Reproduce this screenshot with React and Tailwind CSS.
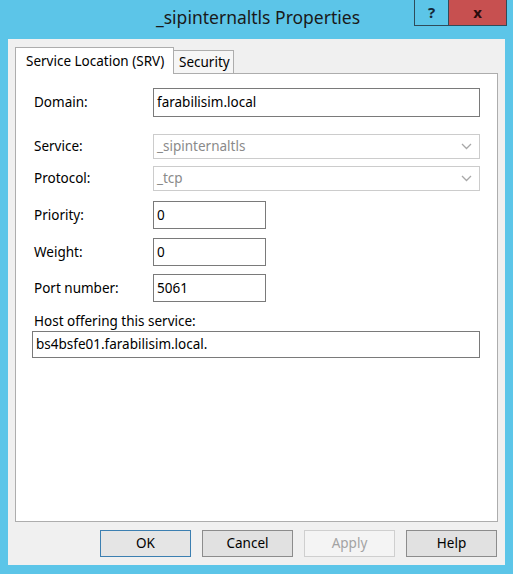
const font = { fontFamily: '"Noto Sans", "Open Sans", Arial, sans-serif' };

const Chevron = () => (
  <svg width="11" height="7" viewBox="0 0 11 7" className="mr-[7px]">
    <path d="M1 1 L5.5 5.5 L10 1" fill="none" stroke="#a8a8a8" strokeWidth="1.3" />
  </svg>
);

const TextRow = ({ label, value, mt, h, w }) => (
  <div className={`flex items-center ${mt}`}>
    <div className="w-[121px] pl-[2px] text-[13.5px] text-black">{label}</div>
    <div className={`${w} ${h} border border-[#7a7a7a] bg-white flex items-center pl-[3px] text-[13.5px] text-black`}>
      {value}
    </div>
  </div>
);

const SelectRow = ({ label, value, mt }) => (
  <div className={`flex items-center ${mt}`}>
    <div className="w-[121px] pl-[2px] text-[13.5px] text-black">{label}</div>
    <div className="w-[327px] h-[25px] border border-[#cccccc] bg-white flex items-center justify-between pl-[3px] text-[13.5px] text-[#8a8a8a]">
      <span>{value}</span>
      <Chevron />
    </div>
  </div>
);

const DlgButton = ({ children, variant }) => {
  const styles = {
    default: 'border-[#3c7fb1] bg-[#e5e5e5] text-black',
    normal: 'border-[#8c8c8c] bg-[#e1e1e1] text-black',
    disabled: 'border-[#cfcfcf] bg-[#f4f4f4] text-[#a3a3a3]',
  };
  return (
    <div className={`w-[91px] h-[27px] border flex items-center justify-center text-[13.5px] ${styles[variant]}`}>
      {children}
    </div>
  );
};

export default function App() {
  return (
    <div className="w-[513px] h-[574px] bg-[#5cc5e8] flex flex-col overflow-hidden" style={font}>
      <div className="relative h-[39px] flex items-center justify-center">
        <span className="text-[17.5px] text-[#1a1a1a] leading-none -mt-[4px] pl-[3px]">_sipinternaltls Properties</span>
        <div className="absolute right-[6px] top-0 flex border border-t-0 border-[#2f4b5a] h-[26px]">
          <div className="w-[34px] bg-[#5cc5e8] flex items-center justify-center text-[15px] font-bold text-[#14283a] border-r border-[#2f4b5a]">?</div>
          <div className="w-[57px] bg-[#c75050] flex items-center justify-center text-[15px] font-bold text-[#2a0d0d]">x</div>
        </div>
      </div>

      <div className="mx-[8px] h-[526px] bg-[#f0f0f0] flex flex-col pl-[7px] pr-[7px]">
        <div className="flex items-end h-[34px] pt-[7px]">
          <div className="w-[159px] h-[27px] bg-white border border-b-0 border-[#adadad] flex items-center pl-[10px] text-[13.5px] text-black relative z-10 -mb-px">
            Service Location (SRV)
          </div>
          <div className="w-[60px] h-[23px] bg-[#f6f6f6] border border-l-0 border-b-0 border-[#adadad] flex items-center pl-[5px] text-[13.5px] text-black">
            Security
          </div>
        </div>

        <div className="h-[449px] bg-white border border-[#adadad] px-[16px]">
          <TextRow label="Domain:" value="farabilisim.local" mt="mt-[14px]" h="h-[29px]" w="w-[327px]" />
          <SelectRow label="Service:" value="_sipinternaltls" mt="mt-[17px]" />
          <SelectRow label="Protocol:" value="_tcp" mt="mt-[7px]" />
          <TextRow label="Priority:" value="0" mt="mt-[10px]" h="h-[28px]" w="w-[113px]" />
          <TextRow label="Weight:" value="0" mt="mt-[9px]" h="h-[28px]" w="w-[113px]" />
          <TextRow label="Port number:" value="5061" mt="mt-[8px]" h="h-[28px]" w="w-[113px]" />
          <div className="mt-[10px] h-[19px] pl-[2px] flex items-center text-[13.5px] text-black">Host offering this service:</div>
          <div className="w-[448px] h-[27px] border border-[#7a7a7a] bg-white flex items-center pl-[3px] text-[13.5px] text-black">
            bs4bsfe01.farabilisim.local.
          </div>
        </div>

        <div className="flex justify-end gap-[11px] mt-[8px] pr-[1px]">
          <DlgButton variant="default">OK</DlgButton>
          <DlgButton variant="normal">Cancel</DlgButton>
          <DlgButton variant="disabled">Apply</DlgButton>
          <DlgButton variant="normal">Help</DlgButton>
        </div>
      </div>
    </div>
  );
}
